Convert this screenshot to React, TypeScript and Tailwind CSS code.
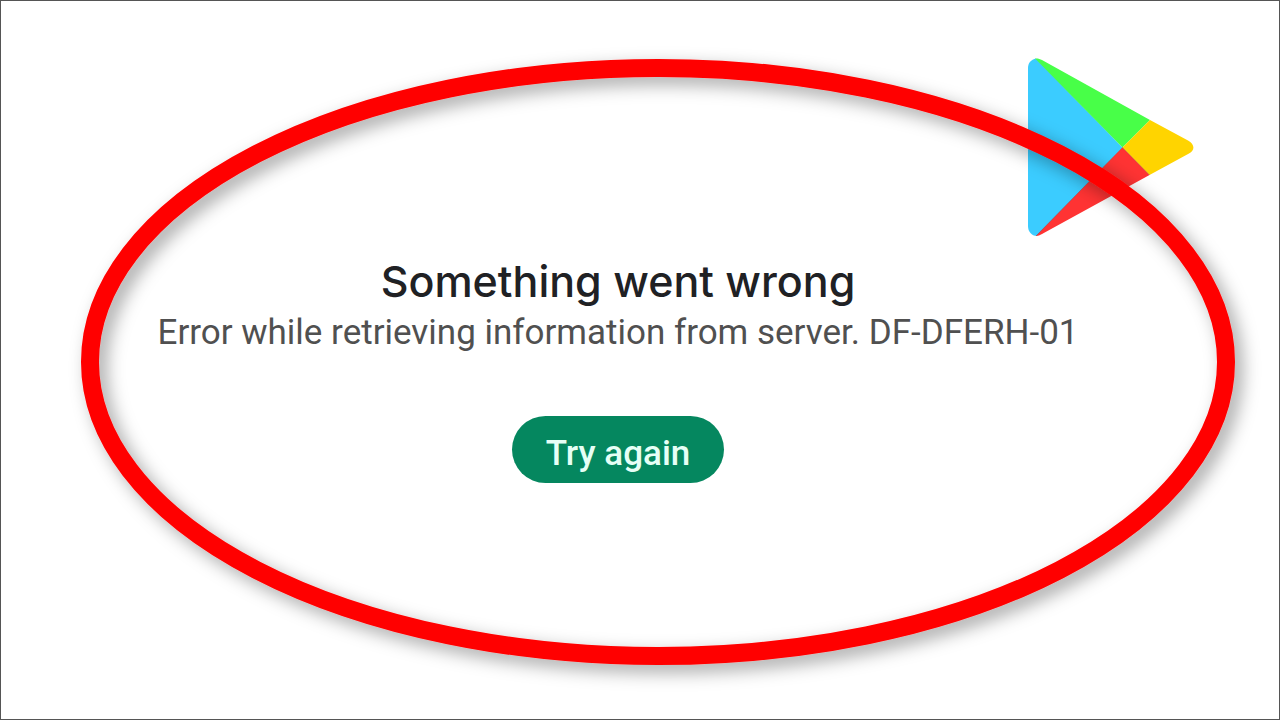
function PlayLogo() {
  return (
    <svg
      viewBox="0 0 166 178"
      className="h-[178px] w-[166px]"
      role="img"
      aria-label="Google Play"
    >
      <path
        d="M8 0.5 C3 1.5 0 5 0 10 V168 C0 173.500 3.500 178 9 178 L94.500 89.500 Z"
        fill="#3bccff"
      />
      <path d="M7 0.500 C9.500 0.200 12 0.800 14 2 L122 62 L94.500 89.500 Z" fill="#48ff48" />
      <path d="M94.500 89.500 L121.500 117 L14 176 C12 177.300 10 178 8 178 Z" fill="#ff3333" />
      <path
        d="M122 62 L160 82.500 C166.500 86 167.500 92 161 95.500 L121.500 117 L94.500 89.500 Z"
        fill="#ffd400"
      />
      <path
        d="M8 178 L94.500 89.500 L121.500 117"
        fill="none"
        stroke="#a83232"
        strokeOpacity="0.6"
        strokeWidth="0.8"
      />
    </svg>
  );
}

function HighlightRing() {
  return (
    <svg
      viewBox="0 0 1280 720"
      className="pointer-events-none absolute -inset-px h-[calc(100%+2px)] w-[calc(100%+2px)]"
      aria-hidden="true"
    >
      <defs>
        <filter id="ring-shadow" x="-10%" y="-10%" width="120%" height="120%">
          <feDropShadow dx="7" dy="7" stdDeviation="9" floodColor="#000000" floodOpacity="0.35" />
        </filter>
      </defs>
      <ellipse
        cx="658"
        cy="362"
        rx="568"
        ry="294"
        fill="none"
        stroke="#ff0000"
        strokeWidth="18"
        filter="url(#ring-shadow)"
      />
    </svg>
  );
}

export default function App() {
  return (
    <div className="relative flex min-h-screen flex-col border border-[#555555] bg-white">
      <header className="flex justify-end pt-[57px] pr-[85px]">
        <PlayLogo />
      </header>

      <main className="flex flex-col items-center pt-5 pr-11 text-center font-['Roboto',sans-serif]">
        <h1 className="font-['Inter',sans-serif] text-[43px] leading-[50px] font-medium text-[#202124]">
          Something went wrong
        </h1>
        <p className="text-[35px] leading-[54px] text-[#505050]">
          Error while retrieving information from server. DF-DFERH-01
        </p>
        <button
          type="button"
          className="mt-14 rounded-full bg-[#05875f] px-[34px] pt-3 pb-1 text-[35px] leading-[51px] font-medium text-[#e6fff6]"
        >
          Try again
        </button>
      </main>

      <HighlightRing />
    </div>
  );
}
